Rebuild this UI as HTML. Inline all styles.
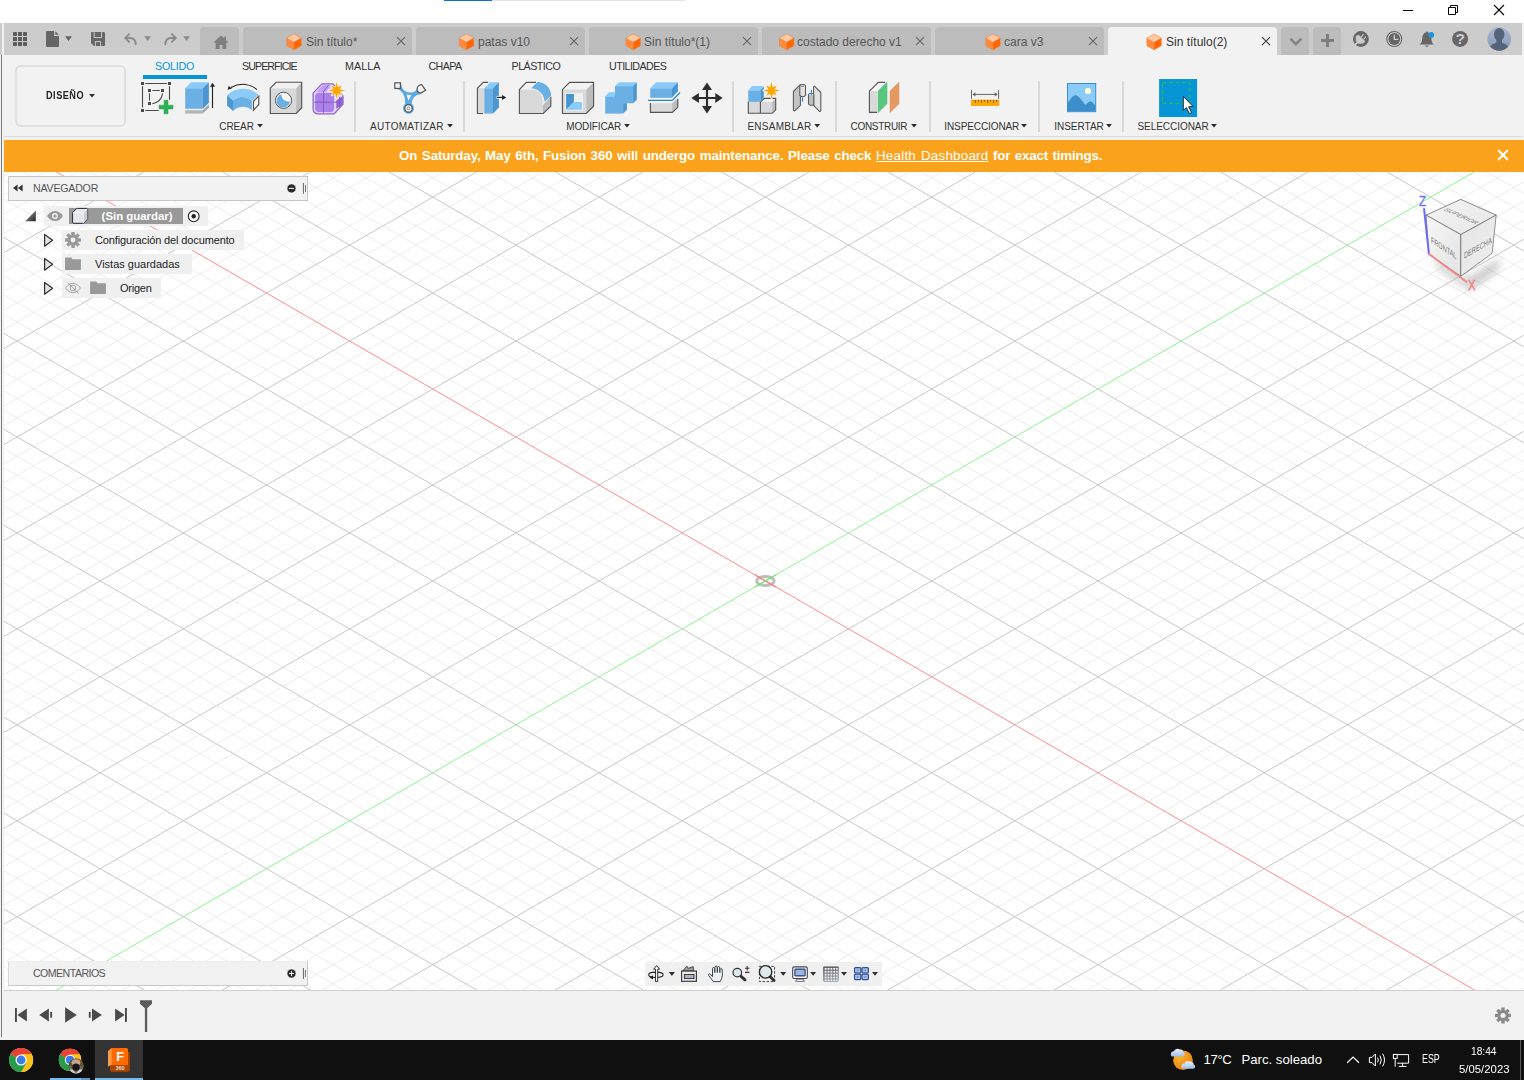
<!DOCTYPE html>
<html lang="es">
<head>
<meta charset="utf-8">
<title>Autodesk Fusion 360</title>
<style>
html,body{margin:0;padding:0}
body{width:1524px;height:1080px;position:relative;overflow:hidden;background:#fff;font-family:"Liberation Sans",Arial,sans-serif;font-size:11px;color:#333}
.a{position:absolute}
svg{position:absolute;overflow:visible}
.t{position:absolute;white-space:nowrap;line-height:1}
/* chrome */
#tabbar{left:4px;top:23px;width:1518px;height:32px;background:#ccc}
#ribbon{left:2px;top:55px;width:1522px;height:85px;background:#f2f2f2}
.dtab{position:absolute;top:27px;height:28px;width:169px;background:#bcbcbc;border-radius:4px 4px 0 0}
.dtab.on{background:#f2f2f2}
.dtab .t{top:9px;font-size:12px;color:#555}
.dtab.on .t{color:#333}
.rt{top:61px;font-size:10.7px;color:#333;letter-spacing:-.1px}
.gl{top:122px;font-size:10px;color:#333}
.sep{position:absolute;top:81px;width:1.5px;height:51px;background:#d9d9d9}
.grid{position:absolute;overflow:hidden}
.row{position:absolute;height:20px;background:#f0f0f0}
.row .t{font-size:11px;color:#222;top:5px}
</style>
</head>
<body>

<!-- title bar -->
<div class="a" style="left:444px;top:0;width:48px;height:1px;background:#0a6fd6"></div>
<div class="a" style="left:492px;top:0;width:193px;height:1px;background:#e3e3e3"></div>
<svg style="left:1396px;top:0" width="128" height="22" viewBox="0 0 128 22">
  <path d="M7 10.5H17" stroke="#000" stroke-width="1" fill="none"/>
  <path d="M52.5 7.5H59.5V14.5H52.5ZM54.5 7.5V5.5H61.5V12.5H59.5" stroke="#000" stroke-width="1" fill="none"/>
  <path d="M98 5L108 15M108 5L98 15" stroke="#000" stroke-width="1.1" fill="none"/>
</svg>
<!-- window frame -->
<div class="a" style="left:0;top:23px;width:2px;height:32px;background:#cbcbcb"></div>
<div class="a" style="left:2px;top:23px;width:2px;height:32px;background:#f0f0f0"></div>
<div class="a" style="left:0;top:55px;width:4px;height:985px;background:#f2f2f2"></div>
<div class="a" style="left:1px;top:55px;width:1.4px;height:982px;background:#7a7a7a"></div>
<div id="tabbar" class="a"></div>
<div class="a" style="left:1522px;top:23px;width:2px;height:32px;background:#f2f2f2"></div>
<!-- quick access -->
<svg style="left:4px;top:23px" width="240" height="32" viewBox="4 23 240 32">
  <g fill="#5c5c5c">
    <rect x="13" y="32" width="4" height="4" rx=".8"/><rect x="18" y="32" width="4" height="4"/><rect x="23" y="32" width="4" height="4" rx=".8"/>
    <rect x="13" y="37" width="4" height="4"/><rect x="18" y="37" width="4" height="4"/><rect x="23" y="37" width="4" height="4"/>
    <rect x="13" y="42" width="4" height="4" rx=".8"/><rect x="18" y="42" width="4" height="4"/><rect x="23" y="42" width="4" height="4" rx=".8"/>
  </g>
  <!-- file -->
  <path d="M47 31H54.1V35.9H59V46A1 1 0 0 1 58 47H47A1 1 0 0 1 46 46V32A1 1 0 0 1 47 31Z" fill="#666"/>
  <path d="M55.3 31.2L58.9 34.7H55.3Z" fill="#666"/>
  <path d="M65 36.2H72L68.5 41Z" fill="#666"/>
  <!-- save -->
  <path d="M92 32H104A1 1 0 0 1 105 33V45A1 1 0 0 1 104 46H94L91 43V33A1 1 0 0 1 92 32Z" fill="#666"/>
  <path d="M94.2 32V37.6H101.6V32" stroke="#ccc" stroke-width="1" fill="none"/>
  <path d="M95.4 46V41.6H100.6V46" stroke="#ccc" stroke-width="1" fill="none"/>
  <!-- undo -->
  <g stroke="#8a8a8a" stroke-width="1.8" fill="none" stroke-linecap="butt" stroke-linejoin="miter">
    <path d="M129.6 33.6L125.2 38L129.6 42.4"/>
    <path d="M125.6 38H130.5Q135.8 38.6 135.8 45"/>
    <path d="M171.4 33.6L175.8 38L171.4 42.4"/>
    <path d="M175.4 38H170.5Q165.2 38.6 165.2 45"/>
  </g>
  <path d="M144.2 36.3H151L147.6 41Z" fill="#8a8a8a"/>
  <path d="M183.2 36.3H190L186.6 41Z" fill="#8a8a8a"/>
  <!-- home tab -->
  <path d="M200 55V31A4 4 0 0 1 204 27H235A4 4 0 0 1 239 31V55Z" fill="#bcbcbc"/>
  <path d="M221 35.4L213.4 42.4H215.6V49H219.6V45H222.4V49H226.4V42.4H228.6L226 40V36.6H224.4V38.5Z" fill="#7f7f7f"/>
</svg>
<!-- document tabs -->
<div class="dtab" style="left:243px"><span class="t" style="left:63px">Sin título*</span></div>
<div class="dtab" style="left:416px"><span class="t" style="left:62px">patas v10</span></div>
<div class="dtab" style="left:589px"><span class="t" style="left:55px">Sin título*(1)</span></div>
<div class="dtab" style="left:762px"><span class="t" style="left:35px">costado derecho v1</span></div>
<div class="dtab" style="left:935px"><span class="t" style="left:69px">cara v3</span></div>
<div class="dtab on" style="left:1108px"><span class="t" style="left:58px">Sin título(2)</span></div>
<svg style="left:0;top:23px" width="1524" height="32" viewBox="0 23 1524 32">
  <defs>
    <g id="cube">
      <path d="M7.2 0L14.4 3.9L7.2 7.9L0 3.9Z" fill="#ffc9a3"/>
      <path d="M0 3.9L7.2 7.9V15.8L0 11.8Z" fill="#ff8a3c"/>
      <path d="M14.4 3.9L7.2 7.9V15.8L14.4 11.8Z" fill="#f60"/>
      <path d="M7.2 0L14.4 3.9V11.8L7.2 15.8L0 11.8V3.9Z" fill="none" stroke="#f07a2a" stroke-width=".5"/>
    </g>
    <path id="tx" d="M-4 -4L4 4M4 -4L-4 4" stroke-width="1.15" fill="none"/>
  </defs>
  <use href="#cube" x="286.8" y="34"/><use href="#tx" x="401" y="41.2" stroke="#686868"/>
  <use href="#cube" x="459.3" y="34"/><use href="#tx" x="574" y="41.2" stroke="#686868"/>
  <use href="#cube" x="626" y="34"/><use href="#tx" x="747" y="41.2" stroke="#686868"/>
  <use href="#cube" x="779.5" y="34"/><use href="#tx" x="920" y="41.2" stroke="#686868"/>
  <use href="#cube" x="985.8" y="34"/><use href="#tx" x="1093" y="41.2" stroke="#686868"/>
  <use href="#cube" x="1146.9" y="34"/><use href="#tx" x="1266" y="41.2" stroke="#444"/>
  <!-- dropdown + plus buttons -->
  <path d="M1281 55V31A4 4 0 0 1 1285 27H1305A4 4 0 0 1 1309 31V55Z" fill="#bcbcbc"/>
  <path d="M1313 55V31A4 4 0 0 1 1317 27H1337A4 4 0 0 1 1341 31V55Z" fill="#bcbcbc"/>
  <path d="M1290.5 38.8L1295.9 44.1L1301.3 38.8" stroke="#858585" stroke-width="2.6" fill="none"/>
  <path d="M1321 39H1334V42H1321ZM1326 34H1329V47H1326Z" fill="#7d7d7d"/>
  <!-- extensions -->
  <g id="ext">
    <circle cx="1360.9" cy="39" r="7.9" fill="#666"/>
    <path d="M1357 35.4L1359.2 35.6L1364.7 41.2L1363.5 43L1358.8 43.4L1356.3 41.4L1356.1 36.8Z" fill="#ccc" stroke="#ccc" stroke-width=".8" stroke-linejoin="round"/>
    <path d="M1358 42.2L1354 45.4" stroke="#ccc" stroke-width="1.7"/>
    <path d="M1361.2 37.1L1363.4 34.2M1363.9 39.2L1365.9 36.7" stroke="#ccc" stroke-width="1.1"/>
  </g>
  <!-- clock -->
  <circle cx="1394.3" cy="39" r="7.5" fill="none" stroke="#666" stroke-width="1.1"/>
  <circle cx="1394.3" cy="39" r="5.9" fill="#666"/>
  <path d="M1394.3 34.8V39.4H1398.4" stroke="#ccc" stroke-width="1.3" fill="none"/>
  <!-- bell -->
  <path d="M1419.6 44.6C1422 42.8 1422 40.6 1422.2 38.2C1422.5 34.8 1424 33 1425.8 32.6C1425.8 31.2 1427.8 31.2 1427.8 32.6C1429.6 33 1431.1 34.8 1431.4 38.2C1431.6 40.6 1431.6 42.8 1434 44.6Z" fill="#666"/>
  <path d="M1424.8 45.6H1428.8Q1426.8 48.2 1424.8 45.6Z" fill="#666"/>
  <circle cx="1431.2" cy="34.9" r="2.9" fill="#1a95e0"/>
  <!-- help -->
  <circle cx="1460.1" cy="38.9" r="8" fill="#666"/>
  <!-- avatar -->
  <defs>
    <linearGradient id="av" x1="0" y1="0" x2="0" y2="1"><stop offset="0" stop-color="#a9b9d2"/><stop offset="1" stop-color="#8697b5"/></linearGradient>
    <clipPath id="avc"><circle cx="1499.2" cy="39" r="11.8"/></clipPath>
  </defs>
  <circle cx="1499.2" cy="39" r="11.8" fill="url(#av)"/>
  <g clip-path="url(#avc)" fill="#566479">
    <ellipse cx="1499.2" cy="34.4" rx="5.2" ry="6.4"/>
    <path d="M1488 53C1488.6 45.6 1493 44 1496.6 42.6H1501.8C1505.4 44 1509.8 45.6 1510.4 53Z"/>
    <rect x="1496.4" y="38" width="5.6" height="6"/>
  </g>
</svg>
<span class="t" style="left:1455.6px;top:31.2px;font-size:15.5px;font-weight:bold;color:#ccc">?</span>

<div id="ribbon" class="a"></div>
<div class="a" style="left:4px;top:136px;width:1518px;height:1px;background:#dcdcdc"></div>
<!-- workspace button -->
<div class="a" style="left:15.2px;top:65px;width:110.8px;height:61.6px;border:2px solid #dfdfdf;border-radius:6px;background:#f2f2f2;box-sizing:border-box"></div>
<span class="t" style="left:46px;top:90px;font-size:10.9px;font-weight:bold;color:#222;letter-spacing:.6px;transform:scaleX(.84);transform-origin:0 0">DISEÑO</span>
<!-- ribbon tabs -->
<span class="t rt" style="left:155px;color:#0696d7;letter-spacing:-0.23px">SOLIDO</span>
<span class="t rt" style="left:242px;letter-spacing:-0.95px">SUPERFICIE</span>
<span class="t rt" style="left:345px;letter-spacing:0.1px">MALLA</span>
<span class="t rt" style="left:428.5px;letter-spacing:-0.6px">CHAPA</span>
<span class="t rt" style="left:511.5px;letter-spacing:-0.5px">PLÁSTICO</span>
<span class="t rt" style="left:609px;letter-spacing:-0.56px">UTILIDADES</span>
<div class="a" style="left:142.5px;top:75.3px;width:64px;height:3.4px;background:#0696d7"></div>
<!-- group labels -->
<span class="t gl" style="left:219.3px;letter-spacing:-0.1px">CREAR</span>
<span class="t gl" style="left:370px;letter-spacing:0.27px">AUTOMATIZAR</span>
<span class="t gl" style="left:566.3px;letter-spacing:-0.15px">MODIFICAR</span>
<span class="t gl" style="left:747.4px;letter-spacing:0.27px">ENSAMBLAR</span>
<span class="t gl" style="left:850.5px;letter-spacing:-0.3px">CONSTRUIR</span>
<span class="t gl" style="left:944.3px;letter-spacing:-0.1px">INSPECCIONAR</span>
<span class="t gl" style="left:1054.2px;letter-spacing:0px">INSERTAR</span>
<span class="t gl" style="left:1137.4px;letter-spacing:-0.04px">SELECCIONAR</span>
<div class="sep" style="left:354.3px"></div>
<div class="sep" style="left:463.3px"></div>
<div class="sep" style="left:732.4px"></div>
<div class="sep" style="left:835.3px"></div>
<div class="sep" style="left:929.3px"></div>
<div class="sep" style="left:1038.1px"></div>
<div class="sep" style="left:1122px"></div>
<svg style="left:0;top:55px" width="1524" height="85" viewBox="0 55 1524 85">
  <defs>
    <path id="dd" d="M-2.9 -1.7H2.9L0 1.7Z" fill="#2a2a2a"/>
    <path id="star" d="M0.00 -8.40L1.30 -3.14L5.09 -5.09L3.14 -1.30L8.40 0.00L3.14 1.30L5.09 5.09L1.30 3.14L0.00 8.40L-1.30 3.14L-5.09 5.09L-3.14 1.30L-8.40 0.00L-3.14 -1.30L-5.09 -5.09L-1.30 -3.14Z" fill="#fca800" stroke="#f4efe8" stroke-width="1.5" stroke-linejoin="round" paint-order="stroke"/>
  </defs>
  <use href="#dd" x="92" y="95.8"/>
  <use href="#dd" x="260" y="125.8"/><use href="#dd" x="450" y="125.8"/><use href="#dd" x="627" y="125.8"/>
  <use href="#dd" x="817.2" y="125.8"/><use href="#dd" x="914" y="125.8"/><use href="#dd" x="1024" y="125.8"/>
  <use href="#dd" x="1109" y="125.8"/><use href="#dd" x="1214" y="125.8"/>
  <!-- 1 sketch -->
  <g fill="#4a4a4a">
    <rect x="141" y="82" width="3" height="3"/><rect x="168" y="82" width="3" height="3"/><rect x="141" y="109" width="3" height="3"/>
    <rect x="148" y="89" width="3" height="3"/><rect x="161" y="89" width="3" height="3"/><rect x="148" y="102" width="3" height="3"/>
  </g>
  <g stroke="#4a4a4a" stroke-width="1.1" fill="none">
    <path d="M145.3 83.5H166.8M142.5 86.2V107.6M169.5 86.2V99.8M145.3 110.5H158.7"/>
    <path d="M152.3 90.5H159.8M149.5 93.3V100.6"/>
    <path d="M162.7 93.3C161.8 98.6 157.6 102.6 152.3 103.7"/>
  </g>
  <path d="M164.1 100.2H168V105.2H173V108.9H168V113.8H164.1V108.9H159.1V105.2H164.1Z" fill="#2bb255" stroke="#219a47" stroke-width=".5"/>
  <!-- 2 extrude -->
  <path d="M185.2 88.2H202.9V108.8H185.2Z" fill="#6bb0e5"/>
  <path d="M185.2 88.2L191 82.2H208.9L202.9 88.2Z" fill="#8acbfa"/>
  <path d="M202.9 88.2L208.9 82.2V102.8L202.9 108.8Z" fill="#4b96d1"/>
  <path d="M185.2 110.2H202.9V113.6H185.2Z" fill="#b5b5b5"/>
  <path d="M202.9 110.2L208.9 104.2V107.6L202.9 113.6Z" fill="#a2a2a2"/>
  <path d="M212.5 86.1V107.9" stroke="#222" stroke-width="1.12"/>
  <path d="M210 86.8L212.5 82.8L215 86.8Z" fill="#222"/>
  <!-- 3 revolve -->
  <path d="M256.9 89.6C251 84 241 82.2 230.9 87.4" stroke="#222" stroke-width="1.1" fill="none"/>
  <path d="M227.6 89.8L228.7 85.9L232 88.5Z" fill="#222"/>
  <path d="M227.1 95.2C236 87 250 86.6 258.6 95L251.9 100.9C246 95.6 239 95.6 233 100.6Z" fill="#8ccbf9"/>
  <path d="M227.1 95.2L233 100.6V110.9L227.1 105.4Z" fill="#4b96d1"/>
  <path d="M233 100.6C239 95.6 246 95.6 251.9 100.9V109.9C246 105.6 239 105.8 233 110.9Z" fill="#6bb0e5"/>
  <path d="M253.5 101.2L258.8 96.1V104.6L253.5 110.2Z" fill="#fafafa" stroke="#555" stroke-width="1.2"/>
  <!-- 4 hole -->
  <path d="M270.3 88.2H296.2V113.5H270.3Z" fill="#d9d9d9"/>
  <path d="M270.3 88.2L276.1 82.3H301.7L296.2 88.2Z" fill="#f1f1f1"/>
  <path d="M296.2 88.2L301.7 82.3V107.7L296.2 113.5Z" fill="#bcbcbc"/>
  <path d="M270.3 88.2L276.1 82.3H301.7V107.7L296.2 113.5H270.3Z" fill="none" stroke="#525252" stroke-width="1.12" stroke-linejoin="miter"/>
  <circle cx="283.5" cy="100.3" r="8.1" fill="#f3f3f3" stroke="#555" stroke-width="1"/>
  <path d="M281.6 94.4A6.6 6.6 0 1 0 289.8 101.2A6.4 6.4 0 0 1 281.6 94.4Z" fill="#6bb0e5"/>
  <!-- 5 form -->
  <path d="M313.1 93.2L321.6 84.2Q322 83.9 322.6 83.9H333L343 96V104.2L334.6 113.3Q334.2 113.8 333.6 113.8H318.4Q313.1 113.8 313.1 108.4Z" fill="#e0d0f6" stroke="#8d63c8" stroke-width="1.2"/>
  <path d="M316.6 92.2L322.6 85.2H331L326 92.2Z" fill="#c59bfb"/>
  <rect x="315.2" y="93.1" width="18.8" height="18.8" rx="3.4" fill="#ab80e8"/>
  <path d="M336.3 100.6L342.8 96.2V104.2L336.3 108.7Z" fill="#9065d0"/>
  <path d="M328.6 85L323.5 91.6V112.6M313.8 102.2H336.2L342.6 97.6" stroke="#7f58b8" stroke-width=".9" fill="none"/>
  <path d="M339.6 96.8V107" stroke="#7f58b8" stroke-width=".8"/>
  <use href="#star" x="336.6" y="90.5"/>
  <!-- 6 automate -->
  <path d="M395.3 88.4C401 89.6 405.6 94 405.2 103.8A5.5 5.5 0 1 0 411.8 103.8C411.8 97.4 416 94.2 421.4 94.2L417.4 88.4C415.6 91.4 413 92.6 410.2 92.6C405.4 92.6 401.6 89.6 401.2 83.6Z" fill="#5aa9e6"/>
  <path d="M406.6 94.6L411.4 95.3L408.3 100.8Z" fill="#f2f2f2"/>
  <rect x="394.8" y="82.8" width="5.6" height="5.6" fill="#f5f5f5" stroke="#555" stroke-width="1.2"/>
  <path d="M417.1 89.4C417.1 86.8 418.8 85.2 421.5 84.5L425.6 90.4L421.2 92.8C418.8 92.8 417.1 91.4 417.1 89.4Z" fill="#f5f5f5" stroke="#555" stroke-width="1.2"/>
  <circle cx="408.5" cy="108.4" r="3.7" fill="#f5f5f5" stroke="#555" stroke-width="1.2"/>
  <circle cx="408.5" cy="108.4" r="1.4" fill="none" stroke="#777" stroke-width=".8"/>
  <!-- 7 press pull -->
  <path d="M477.4 88.2L483.3 82.3H490L484.2 88.2Z" fill="#f3f3f3"/>
  <path d="M477.4 88.2H484.2V113.5H477.4Z" fill="#d9d9d9"/>
  <path d="M488.2 82.4H483.3L477.4 88.3V113.5H483" fill="none" stroke="#555" stroke-width="1.12"/>
  <path d="M484.3 88.2H493V113.6H484.3Z" fill="#6bb0e5"/>
  <path d="M484.3 88.2L490.3 82.2H498.9L493 88.2Z" fill="#8acbfa"/>
  <path d="M493 88.2L498.9 82.2V107.6L493 113.6Z" fill="#4b96d1"/>
  <path d="M496.6 97.4H503" stroke="#f6f6f6" stroke-width="3"/>
  <path d="M497 97.4H503" stroke="#222" stroke-width="1.2"/>
  <path d="M502.1 95L506.3 97.4L502.1 99.9Z" fill="#222"/>
  <!-- 8 fillet -->
  <path d="M519.4 89.6L526.3 82.4H537.4L530.9 89.6Z" fill="#f3f3f3"/>
  <path d="M519.4 89.6H532.3A10.4 10.4 0 0 1 542.7 100V113.5H519.4Z" fill="#d9d9d9"/>
  <path d="M530.9 88.5L537.4 82A13.7 13.7 0 0 1 551.1 95.5L544.4 101.9A13.4 13.4 0 0 0 530.9 88.5Z" fill="#6bb0e5"/>
  <path d="M530.9 88.5A13.4 13.4 0 0 1 544.4 101.9L542.7 103.6V100A10.4 10.4 0 0 0 532.3 89.6Z" fill="#ececec"/>
  <path d="M542.9 104.9L550.8 97V106.2L542.9 113.5Z" fill="#bcbcbc"/>
  <path d="M536 82.4H526.3L519.4 89.6V113.5H543.3L550.8 106.2V96.8" fill="none" stroke="#555" stroke-width="1.12"/>
  <!-- 9 shell -->
  <path d="M562.4 89.6L569.6 82.4H593.6L586.3 89.6Z" fill="#f3f3f3"/>
  <path d="M562.4 89.6H586.3V113.5H562.4Z" fill="#d9d9d9"/>
  <path d="M586.3 89.6L593.6 82.4V106.2L586.3 113.5Z" fill="#bcbcbc"/>
  <path d="M562.4 89.6L569.6 82.4H593.6V106.2L586.3 113.5H562.4Z" fill="none" stroke="#555" stroke-width="1.12"/>
  <rect x="565" y="92.8" width="18" height="18" fill="#f0f0f0"/>
  <path d="M566.1 94H573.9V101.9L566.1 109.8Z" fill="#4794ce"/>
  <path d="M566.1 109.8L573.9 101.9H581.9V109.8Z" fill="#8acbfa"/>
  <!-- 10 combine -->
  <path d="M615 86.1H633.1V103.3H615Z" fill="#6bb0e5"/>
  <path d="M615 86.1L619.1 82.2H636.8L633.1 86.1Z" fill="#8acbfa"/>
  <path d="M633.1 86.1L636.8 82.2V99.8L633.1 103.3Z" fill="#4b96d1"/>
  <path d="M605.2 96.3H623.1V113.6H605.2Z" fill="#6bb0e5"/>
  <path d="M605.2 96.3L609.1 92.3H615V96.3Z" fill="#8acbfa"/>
  <path d="M623.1 103.3H626.9V109.8L623.1 113.6Z" fill="#4b96d1"/>
  <!-- 11 split -->
  <path d="M650.2 88.2H672V97.8H650.2Z" fill="#6bb0e5"/>
  <path d="M650.2 88.2L656.1 82.2H677.9L672 88.2Z" fill="#8acbfa"/>
  <path d="M672 88.2L677.9 82.2V91.2L672 97.8Z" fill="#4b96d1"/>
  <path d="M650.7 103.3H672.2V112.3H650.7Z" fill="#d9d9d9"/>
  <path d="M672.2 103.3L677.7 98.6V107.3L672.2 112.4Z" fill="#bcbcbc"/>
  <path d="M650.4 103V112.4H672.3L677.8 107.3V98.7" fill="none" stroke="#555" stroke-width="1.12"/>
  <path d="M648 100.3H672.3L680 92.5" fill="none" stroke="#f6f2ec" stroke-width="3.2"/>
  <path d="M648 100.3H672.3L680 92.5" fill="none" stroke="#1e88e5" stroke-width="1.2"/>
  <!-- 12 move -->
  <path d="M707 82.5L712 89.9H708.1V96.9H715.3V93L722.6 98L715.3 103V99.1H708.1V106H712L707 113.5L702 106H705.9V99.1H698.9V103L691.3 98L698.9 93V96.9H705.9V89.9H702Z" fill="#2e2e2e"/>
  <!-- 13 new component -->
  <path d="M748.3 102H760.4V113.3H748.3Z" fill="#d9d9d9"/>
  <path d="M760.5 102.1H772.1V113.3H760.5Z" fill="#d9d9d9"/>
  <path d="M760.5 102.1L764 98.4H775.6L772.1 102.1Z" fill="#f3f3f3"/>
  <path d="M772.1 102.1L775.6 98.4V109.8L772.1 113.3Z" fill="#bcbcbc"/>
  <path d="M748.3 101.5V113.3H772.2L775.7 109.8V98.4H764.1L760.4 102.2V113.3" fill="none" stroke="#555" stroke-width="1.12"/>
  <path d="M748.2 90.3H760.3V101.9H748.2Z" fill="#6bb0e5"/>
  <path d="M748.2 90.3L752.2 86.1H763.8L760.3 90.3Z" fill="#8acbfa"/>
  <path d="M760.3 90.3L763.8 86.4V98L760.3 101.9Z" fill="#4b96d1"/>
  <use href="#star" x="771.5" y="90.5"/>
  <!-- 14 joint -->
  <path d="M793.4 91.5L800.4 84.7V105.4L795 110.6Q793.4 111.4 793.4 109.6Z" fill="#c4c4c4" stroke="#5c5c5c" stroke-width="1.08" stroke-linejoin="round"/>
  <path d="M799.8 86.1A2.85 1.6 0 0 1 805.5 86.1V94A2.85 1.7 0 0 1 799.8 95.4Z" fill="#e2e2e2" stroke="#5c5c5c" stroke-width="1.08"/>
  <ellipse cx="802.6" cy="86.3" rx="1.5" ry=".7" fill="#8a8a8a"/>
  <path d="M802.5 97.4V101.7" stroke="#1e88e5" stroke-width="1.12"/>
  <path d="M813.6 86.9L814.4 86.1L820.8 92.5V110.6Q820.4 111.9 819.2 111.2L813.6 105.4Z" fill="#e2e2e2" stroke="#5c5c5c" stroke-width="1.08" stroke-linejoin="round"/>
  <path d="M808.5 94.6A2.7 1.4 0 0 1 813.8 94.6V105.2H810.4Q808.5 105.2 808.5 103.6Z" fill="#bdbdbd" stroke="#5c5c5c" stroke-width="1.08"/>
  <ellipse cx="811.2" cy="94.8" rx="2.1" ry="1" fill="#e6e6e6"/>
  <path d="M811.4 90.1V95.5" stroke="#1e88e5" stroke-width="1.12"/>
  <!-- 15 construct -->
  <path d="M869.4 91.2L878.3 82.4H886L878 91.2Z" fill="#f5f5f5"/>
  <path d="M869.4 91.2H877V112.4H869.4Z" fill="#d9d9d9"/>
  <path d="M885 82.4H878.3L869.4 91.2V112.4H877" fill="none" stroke="#555" stroke-width="1.12"/>
  <path d="M878.2 91L886.9 82.4V103.8L878.2 112.4Z" fill="#5ac77f" stroke="#43b36b" stroke-width=".6"/>
  <path d="M890.1 91L898.9 82.4V103.8L890.1 112.4Z" fill="#e59a63" stroke="#d9894f" stroke-width=".6"/>
  <!-- 16 measure -->
  <rect x="971.2" y="100" width="27.8" height="5.7" fill="#ffa800" stroke="#ea9800" stroke-width=".5"/>
  <path d="M975.3 100V103M978.4 100V101.8M981.5 100V103M984.4 100V101.8M987.6 100V103M990.5 100V101.8M993.7 100V103M996.6 100V101.8" stroke="#7a5a10" stroke-width=".9"/>
  <path d="M971.5 90.1V98.8M998.6 90.1V98.8M973 94.4H997" stroke="#666" stroke-width="1"/>
  <path d="M972.4 94.4L975.4 92.3V96.5ZM997.7 94.4L994.7 92.3V96.5Z" fill="#666"/>
  <!-- 17 insert -->
  <rect x="1067.5" y="83.5" width="28.2" height="28.2" fill="#8acbfa" stroke="#3b8fcf" stroke-width="1"/>
  <circle cx="1088" cy="91" r="3.1" fill="#ffffcf"/>
  <path d="M1068 102.6C1071 97.6 1074 95.2 1075.7 95.2C1079 95.2 1082 101.4 1085.5 105C1087.4 103 1088.8 101.4 1090.4 101.4C1092 101.4 1093.6 103.4 1095.2 105.5V111.2H1068Z" fill="#3d8fc9"/>
  <!-- 18 select -->
  <rect x="1159.1" y="79" width="38" height="38" fill="#0696d7"/>
  <rect x="1162.5" y="82.5" width="27.2" height="20.9" fill="none" stroke="#2bb84a" stroke-width="1.2" stroke-dasharray="4 2.5"/>
  <path d="M1183.3 96.4V110.4L1186.4 107.6L1189.4 113.6L1191.6 112.6L1188.7 106.8L1193 106.4Z" fill="#fff" stroke="#2b2b2b" stroke-width="1"/>

</svg>

<div class="a" style="left:4px;top:140px;width:1520px;height:32px;background:#faa21b"></div>
<span class="t" id="bannertxt" style="left:399px;top:148.5px;font-size:13.4px;font-weight:bold;color:#fff;word-spacing:1px"><span style="letter-spacing:-.15px">On Saturday, May 6th, Fusion 360 will undergo maintenance. Please check </span><span style="font-weight:normal;text-decoration:underline;letter-spacing:.22px">Health Dashboard</span><span style="letter-spacing:-.2px"> for exact timings.</span></span>
<svg style="left:1497px;top:149px" width="12" height="12" viewBox="0 0 12 12"><path d="M1.2 1.2L10.8 10.8M10.8 1.2L1.2 10.8" stroke="#fff" stroke-width="2.1" fill="none"/></svg>

<svg class="grid" style="left:4px;top:172px" width="1520" height="818" viewBox="0 0 1520 818">
<path d="M0 813.91L1520 1690.82M0 794.73L1520 1671.63M0 775.54L1520 1652.44M0 756.35L1520 1633.25M0 717.97L1520 1594.88M0 698.79L1520 1575.69M0 679.60L1520 1556.50M0 660.41L1520 1537.31M0 622.03L1520 1498.94M0 602.85L1520 1479.75M0 583.66L1520 1460.56M0 564.47L1520 1441.37M0 526.09L1520 1403.00M0 506.91L1520 1383.81M0 487.72L1520 1364.62M0 468.53L1520 1345.43M0 430.15L1520 1307.06M0 410.97L1520 1287.87M0 391.78L1520 1268.68M0 372.59L1520 1249.49M0 334.21L1520 1211.12M0 315.03L1520 1191.93M0 295.84L1520 1172.74M0 276.65L1520 1153.55M0 238.27L1520 1115.18M0 219.09L1520 1095.99M0 199.90L1520 1076.80M0 180.71L1520 1057.61M0 142.33L1520 1019.24M0 123.15L1520 1000.05M0 103.96L1520 980.86M0 84.77L1520 961.67M0 46.39L1520 923.30M0 27.21L1520 904.11M0 8.02L1520 884.92M0 -11.17L1520 865.73M0 -49.55L1520 827.36M0 -68.73L1520 808.17M0 -87.92L1520 788.98M0 -107.11L1520 769.79M0 -145.49L1520 731.42M0 -164.67L1520 712.23M0 -183.86L1520 693.04M0 -203.05L1520 673.85M0 -241.43L1520 635.48M0 -260.61L1520 616.29M0 -279.80L1520 597.10M0 -298.99L1520 577.91M0 -337.37L1520 539.54M0 -356.55L1520 520.35M0 -375.74L1520 501.16M0 -394.93L1520 481.97M0 -433.31L1520 443.60M0 -452.49L1520 424.41M0 -471.68L1520 405.22M0 -490.87L1520 386.03M0 -529.25L1520 347.66M0 -548.43L1520 328.47M0 -567.62L1520 309.28M0 -586.81L1520 290.09M0 -625.19L1520 251.72M0 -644.37L1520 232.53M0 -663.56L1520 213.34M0 -682.75L1520 194.15M0 -721.13L1520 155.78M0 -740.31L1520 136.59M0 -759.50L1520 117.40M0 -778.69L1520 98.21M0 -817.07L1520 59.84M0 -836.25L1520 40.65M0 -855.44L1520 21.46M0 -874.63L1520 2.27M0 3.89L1520 -873.02M0 23.07L1520 -853.83M0 42.26L1520 -834.64M0 61.45L1520 -815.45M0 99.83L1520 -777.08M0 119.01L1520 -757.89M0 138.20L1520 -738.70M0 157.39L1520 -719.51M0 195.77L1520 -681.14M0 214.95L1520 -661.95M0 234.14L1520 -642.76M0 253.33L1520 -623.57M0 291.71L1520 -585.20M0 310.89L1520 -566.01M0 330.08L1520 -546.82M0 349.27L1520 -527.63M0 387.65L1520 -489.26M0 406.83L1520 -470.07M0 426.02L1520 -450.88M0 445.21L1520 -431.69M0 483.59L1520 -393.32M0 502.77L1520 -374.13M0 521.96L1520 -354.94M0 541.15L1520 -335.75M0 579.53L1520 -297.38M0 598.71L1520 -278.19M0 617.90L1520 -259.00M0 637.09L1520 -239.81M0 675.47L1520 -201.44M0 694.65L1520 -182.25M0 713.84L1520 -163.06M0 733.03L1520 -143.87M0 771.41L1520 -105.50M0 790.59L1520 -86.31M0 809.78L1520 -67.12M0 828.97L1520 -47.93M0 867.35L1520 -9.56M0 886.53L1520 9.63M0 905.72L1520 28.82M0 924.91L1520 48.01M0 963.29L1520 86.38M0 982.47L1520 105.57M0 1001.66L1520 124.76M0 1020.85L1520 143.95M0 1059.23L1520 182.32M0 1078.41L1520 201.51M0 1097.60L1520 220.70M0 1116.79L1520 239.89M0 1155.17L1520 278.26M0 1174.35L1520 297.45M0 1193.54L1520 316.64M0 1212.73L1520 335.83M0 1251.11L1520 374.20M0 1270.29L1520 393.39M0 1289.48L1520 412.58M0 1308.67L1520 431.77M0 1347.05L1520 470.14M0 1366.23L1520 489.33M0 1385.42L1520 508.52M0 1404.61L1520 527.71M0 1442.99L1520 566.08M0 1462.17L1520 585.27M0 1481.36L1520 604.46M0 1500.55L1520 623.65M0 1538.93L1520 662.02M0 1558.11L1520 681.21M0 1577.30L1520 700.40M0 1596.49L1520 719.59M0 1634.87L1520 757.96M0 1654.05L1520 777.15M0 1673.24L1520 796.34M0 1692.43L1520 815.53" stroke="#dcdcdc" stroke-width=".9" fill="none" opacity="0.6"/>
<path d="M0 737.16L1520 1614.06M0 641.22L1520 1518.12M0 545.28L1520 1422.18M0 449.34L1520 1326.24M0 353.40L1520 1230.30M0 257.46L1520 1134.36M0 161.52L1520 1038.42M0 65.58L1520 942.48M0 -126.30L1520 750.60M0 -222.24L1520 654.66M0 -318.18L1520 558.72M0 -414.12L1520 462.78M0 -510.06L1520 366.84M0 -606.00L1520 270.90M0 -701.94L1520 174.96M0 -797.88L1520 79.02M0 80.64L1520 -796.26M0 176.58L1520 -700.32M0 272.52L1520 -604.38M0 368.46L1520 -508.44M0 464.40L1520 -412.50M0 560.34L1520 -316.56M0 656.28L1520 -220.62M0 752.22L1520 -124.68M0 944.10L1520 67.20M0 1040.04L1520 163.14M0 1135.98L1520 259.08M0 1231.92L1520 355.02M0 1327.86L1520 450.96M0 1423.80L1520 546.90M0 1519.74L1520 642.84M0 1615.68L1520 738.78" stroke="#c4c4c4" stroke-width=".95" fill="none"/>
<path d="M0 -30.36L1520 846.54" stroke="#ff8c8c" stroke-width="1" fill="none"/>
<path d="M0 848.16L1520 -28.74" stroke="#8af58a" stroke-width="1" fill="none"/>
<ellipse cx="761.4" cy="408.9" rx="8.7" ry="4.5" fill="none" stroke="#bebebe" stroke-width="3"/>
<path d="M750.9 402.84L771.9 414.96" stroke="#f77" stroke-width="1.2"/>
<path d="M750.9 414.96L771.9 402.84" stroke="#6e6" stroke-width="1.2"/>
</svg>
<!-- browser -->
<div class="a" style="left:8px;top:176px;width:300px;height:25px;background:#f2f2f2;border:1px solid #c6c6c6;box-sizing:border-box"></div>
<span class="t" style="left:33px;top:183px;font-size:10.6px;color:#555;letter-spacing:-.2px">NAVEGADOR</span>
<div class="row" style="left:44px;top:206px;width:164px"></div>
<div class="a" style="left:69px;top:208px;width:114px;height:16px;background:#999"></div>
<span class="t" style="left:101.6px;top:210.5px;font-size:11.4px;font-weight:bold;color:#fff">(Sin guardar)</span>
<div class="row" style="left:62px;top:230px;width:182px"><span class="t" style="left:33px;letter-spacing:-.13px">Configuración del documento</span></div>
<div class="row" style="left:62px;top:254px;width:130px"><span class="t" style="left:33px">Vistas guardadas</span></div>
<div class="row" style="left:62px;top:278px;width:99px"><span class="t" style="left:58px;letter-spacing:-.25px">Origen</span></div>
<svg style="left:0;top:172px" width="320" height="140" viewBox="0 172 320 140">
  <defs>
    <linearGradient id="tg" x1="0" y1="0" x2="1" y2="1"><stop offset="0" stop-color="#bbb"/><stop offset=".5" stop-color="#666"/><stop offset="1" stop-color="#222"/></linearGradient>
    <path id="exp" d="M44.6 234.4L52.6 240.2L44.6 246.2Z" fill="#e1e3ea" stroke="#2e2e2e" stroke-width="1.2" stroke-linejoin="round"/>
    <path id="fold" d="M0 0H6.2L7.4 1.6H15.8V12.5H0Z" fill="#999"/>
  </defs>
  <!-- header icons -->
  <path d="M13 188L17.6 184.6V191.4ZM18 188L22.6 184.6V191.4Z" fill="#333"/>
  <circle cx="291.5" cy="188.4" r="4.5" fill="#2b2b2b" stroke="#fafafa" stroke-width=".6"/><path d="M288.9 188.4H294.1" stroke="#eee" stroke-width="1.1"/>
  <path d="M303.4 183V193.8" stroke="#666" stroke-width="1"/><path d="M305.5 185.2V191.9" stroke="#777" stroke-width="1"/>
  <!-- row1 -->
  <path d="M25.2 221.3L35.8 210.4V221.3Z" fill="url(#tg)"/>
  <path d="M47 216C49.4 212.4 52 210.9 55 210.9C58 210.9 60.6 212.4 63 216C60.6 219.6 58 221.1 55 221.1C52 221.1 49.4 219.6 47 216Z" fill="#999"/>
  <circle cx="55" cy="216" r="3" fill="#f0f0f0"/><circle cx="55" cy="216" r="1.6" fill="#999"/>
  <path d="M72.6 213.2Q72.6 212.4 73.2 211.8L76.4 208.8Q76.8 208.4 77.6 208.4H86.8Q87.6 208.4 87.6 209.2V218.4Q87.6 219 87.2 219.4L84 222.8Q83.6 223.3 82.8 223.3H73.6Q72.6 223.3 72.6 222.4Z" fill="#e6e8ef" stroke="#2b2b2b" stroke-width="1"/>
  <path d="M73 212.6H83.6L87.2 208.8M83.6 212.6V223" stroke="#fff" stroke-width=".9" fill="none" opacity=".8"/>
  <path d="M83.8 212.8L87.4 209V218.6L83.8 222.6Z" fill="#c9ccd6"/>
  <circle cx="193.7" cy="216.3" r="5.4" fill="#fafafa" stroke="#2b2b2b" stroke-width="1.1"/><circle cx="193.7" cy="216.3" r="2.2" fill="#222"/>
  <!-- expanders -->
  <use href="#exp"/><use href="#exp" y="24"/><use href="#exp" y="48"/>
  <!-- gear -->
  <g transform="translate(73 240)" fill="#999">
    <circle r="5.6"/>
    <g id="teeth"><rect x="-1.7" y="-8" width="3.4" height="16"/><rect x="-8" y="-1.7" width="16" height="3.4"/></g>
    <use href="#teeth" transform="rotate(45)"/>
    <circle r="2.4" fill="#f0f0f0"/>
  </g>
  <use href="#fold" x="65.1" y="257.6"/>
  <use href="#fold" x="90.1" y="281.6"/>
  <!-- hidden eye -->
  <path d="M65.6 288C68 284.6 70.4 283.4 73 283.4C75.6 283.4 78 284.6 80.4 288C78 291.4 75.6 292.6 73 292.6C70.4 292.6 68 291.4 65.6 288Z" fill="none" stroke="#a5a5a5" stroke-width="1"/>
  <circle cx="73" cy="288" r="2.8" fill="none" stroke="#a5a5a5" stroke-width="1"/>
  <path d="M67.6 282.6L78.6 293.4" stroke="#a5a5a5" stroke-width="1"/>
</svg>
<!-- comments -->
<div class="a" style="left:8px;top:961px;width:300px;height:25px;background:#f2f2f2;border:1px solid #c8c8c8;border-top-color:#ededed;border-left-color:#d8d8d8;box-sizing:border-box"></div>
<span class="t" style="left:33px;top:968px;font-size:10.6px;color:#555;letter-spacing:-.54px">COMENTARIOS</span>
<svg style="left:280px;top:961px" width="30" height="25" viewBox="280 961 30 25">
  <circle cx="291.5" cy="973.5" r="4.5" fill="#2b2b2b" stroke="#fafafa" stroke-width=".6"/><path d="M289 973.5H294M291.5 971V976" stroke="#eee" stroke-width="1.1"/>
  <path d="M303.4 968V979" stroke="#666" stroke-width="1"/><path d="M305.4 970V977" stroke="#777" stroke-width="1"/>
</svg>
<svg style="left:1400px;top:180px" width="124" height="124" viewBox="1400 180 124 124">
  <defs>
    <filter id="vsh" x="-50%" y="-50%" width="200%" height="200%"><feGaussianBlur stdDeviation="4"/></filter>
    <linearGradient id="vf" x1="0" y1="0" x2="1" y2="1"><stop offset="0" stop-color="#f8f8f8"/><stop offset="1" stop-color="#e2e2e2"/></linearGradient><linearGradient id="vr" x1="0" y1="0" x2="1" y2="1"><stop offset="0" stop-color="#e4e4e4"/><stop offset="1" stop-color="#f0f0f0"/></linearGradient><linearGradient id="vt" x1="0" y1="0" x2="1" y2="1"><stop offset="0" stop-color="#f4f4f4"/><stop offset="1" stop-color="#e6e6e6"/></linearGradient>
  </defs>
  <path d="M1432 256L1466 280L1500 258L1498 270L1470 290L1440 270Z" fill="#9a9a9a" opacity=".55" filter="url(#vsh)"/>
  <path d="M1426.1 215.1L1460.8 199.4L1496.2 215.1L1460.8 234.6Z" fill="url(#vt)" stroke="#5a5a5a" stroke-width=".7" stroke-linejoin="round"/>
  <path d="M1426.1 215.1L1460.8 234.6V276.2L1428.9 254Z" fill="url(#vf)" stroke="#5a5a5a" stroke-width=".65" stroke-linejoin="round"/>
  <path d="M1460.8 234.6L1496.2 215.1L1492.1 253.3L1460.8 276.2Z" fill="url(#vr)" stroke="#5a5a5a" stroke-width=".65" stroke-linejoin="round"/>
  <path d="M1428.9 254L1424.1 209" stroke="#6a6af2" stroke-width="2" stroke-linecap="round"/>
  <path d="M1428.9 254L1466.4 281.8" stroke="#f08a8a" stroke-width="2" stroke-linecap="round"/>
  <text transform="matrix(.9 .4 -.93 .42 1443 210)" font-family="Liberation Sans,Arial,sans-serif" font-size="6.8" fill="#777" letter-spacing=".1">SUPERIOR</text>
  <text transform="matrix(.648 .428 0 1 1430.9 242.4)" font-family="Liberation Sans,Arial,sans-serif" font-size="8.6" fill="#777">FRONTAL</text>
  <text transform="matrix(.66 -.38 0 1 1464 258.8)" font-family="Liberation Sans,Arial,sans-serif" font-size="8.6" fill="#777">DERECHA</text>
  <text transform="translate(1419 205.5) scale(.84 1)" font-family="Liberation Sans,Arial,sans-serif" font-size="14" fill="#7272f4" stroke="#7272f4" stroke-width=".3">Z</text>
  <text transform="translate(1468 290.4) scale(.78 1)" font-family="Liberation Sans,Arial,sans-serif" font-size="14.6" fill="#f97878" stroke="#f97878" stroke-width=".3">X</text>
</svg>

<div class="a" style="left:645px;top:962px;width:237px;height:24px;background:#f0f0f0"></div>
<svg style="left:645px;top:962px" width="237" height="24" viewBox="645 962 237 24">
  <defs><path id="nd" d="M-3 -1.9H3L0 1.9Z" fill="#2e2e2e"/></defs>
  <!-- orbit -->
  <ellipse cx="655.9" cy="974.8" rx="7.2" ry="2.7" fill="none" stroke="#222" stroke-width="1.1"/>
  <path d="M655.5 981.6V969.2H653.6L656.6 965.6L659.6 969.2H657.7V981.6Z" fill="#f6f6f6" stroke="#222" stroke-width=".9"/>
  <path d="M649.4 977.4L653 975.2V979.6Z" fill="#222"/>
  <use href="#nd" x="671.9" y="974"/>
  <!-- look at -->
  <path d="M682.6 971L686.9 966.2L688.1 968.3L693.2 966.6L693.6 971Z" fill="#9a9a9a" stroke="#444" stroke-width=".9"/>
  <rect x="681.6" y="971.1" width="14.8" height="10.2" fill="#f4f4f4" stroke="#3c3c3c" stroke-width="1.2"/>
  <rect x="684.4" y="974.4" width="9.6" height="4.2" fill="#a9b2c6" stroke="#333" stroke-width="1"/>
  <!-- hand -->
  <g fill="#eef1f6" stroke="#333" stroke-width=".9" stroke-linejoin="round">
    <rect x="712.5" y="967.5" width="2.2" height="8" rx="1.1"/>
    <rect x="715" y="966" width="2.2" height="9" rx="1.1"/>
    <rect x="717.5" y="966.6" width="2.2" height="9" rx="1.1"/>
    <rect x="720" y="968.7" width="2.2" height="8" rx="1.1"/>
    <path d="M712.5 973.4V976.6L710.4 974.2C709.4 973.2 707.8 974.4 708.8 975.6C710.4 977.6 712 979.6 713.2 981.6H720.2C720.8 979.6 722.2 978.4 722.2 975.6V973.4Z"/>
  </g>
  <rect x="713" y="972.6" width="8.8" height="3" fill="#eef1f6"/>
  <!-- zoom -->
  <path d="M740.8 976.2L745 979.8" stroke="#333" stroke-width="3" stroke-linecap="round"/>
  <circle cx="737.3" cy="972.6" r="4.3" fill="#dbeaf1" stroke="#333" stroke-width="1.2"/>
  <path d="M745 968.2H749.4M747.2 966V970.4M745 972.4H749.4" stroke="#333" stroke-width="1.1"/>
  <!-- zoom window -->
  <rect x="759.4" y="966.4" width="15.2" height="15.2" fill="none" stroke="#444" stroke-width="1" stroke-dasharray="2.4 1.6"/>
  <path d="M770 976.4L774 980.4" stroke="#333" stroke-width="2.8" stroke-linecap="round"/>
  <circle cx="765.6" cy="971.9" r="6.2" fill="#deebee" stroke="#222" stroke-width="1.3"/>
  <use href="#nd" x="783.2" y="973.8"/>
  <!-- display -->
  <rect x="792.7" y="966.9" width="14.6" height="11.6" rx="1.4" fill="#fafafa" stroke="#444" stroke-width="1.1"/>
  <rect x="794.9" y="969.1" width="10.2" height="6.8" rx=".6" fill="#9db7e0" stroke="#1f3a7a" stroke-width="1.1"/>
  <path d="M796.6 979.2H803.4L804.2 981.4H795.8Z" fill="#fafafa" stroke="#555" stroke-width=".8"/>
  <use href="#nd" x="813.1" y="973.8"/>
  <!-- grid -->
  <defs><linearGradient id="gg" x1="0" y1="0" x2="0" y2="1"><stop offset="0" stop-color="#4a4a4a"/><stop offset="1" stop-color="#8c94a6"/></linearGradient></defs>
  <rect x="823.2" y="966.4" width="15.4" height="15.4" rx="1" fill="url(#gg)"/>
  <g fill="#f6f6f6">
    <rect x="824.6" y="967.8" width="2" height="2"/><rect x="827.5" y="967.8" width="2" height="2"/><rect x="830.4" y="967.8" width="2" height="2"/><rect x="833.3" y="967.8" width="2" height="2"/><rect x="836.1" y="967.8" width="1.6" height="2"/>
    <rect x="824.6" y="970.7" width="2" height="2"/><rect x="827.5" y="970.7" width="2" height="2"/><rect x="830.4" y="970.7" width="2" height="2"/><rect x="833.3" y="970.7" width="2" height="2"/><rect x="836.1" y="970.7" width="1.6" height="2"/>
    <rect x="824.6" y="973.6" width="2" height="2"/><rect x="827.5" y="973.6" width="2" height="2"/><rect x="830.4" y="973.6" width="2" height="2"/><rect x="833.3" y="973.6" width="2" height="2"/><rect x="836.1" y="973.6" width="1.6" height="2"/>
    <rect x="824.6" y="976.5" width="2" height="2"/><rect x="827.5" y="976.5" width="2" height="2"/><rect x="830.4" y="976.5" width="2" height="2"/><rect x="833.3" y="976.5" width="2" height="2"/><rect x="836.1" y="976.5" width="1.6" height="2"/>
    <rect x="824.6" y="979.4" width="2" height="1.6"/><rect x="827.5" y="979.4" width="2" height="1.6"/><rect x="830.4" y="979.4" width="2" height="1.6"/><rect x="833.3" y="979.4" width="2" height="1.6"/><rect x="836.1" y="979.4" width="1.6" height="1.6"/>
  </g>
  <use href="#nd" x="844" y="973.8"/>
  <!-- viewports -->
  <g fill="#a9c0e4" stroke="#2d4f96" stroke-width="1.2">
    <rect x="854.5" y="967.6" width="6.4" height="5.4" rx="1"/><rect x="862" y="967.6" width="6.4" height="5.4" rx="1"/>
    <rect x="854.5" y="974.2" width="6.4" height="5.4" rx="1"/><rect x="862" y="974.2" width="6.4" height="5.4" rx="1"/>
  </g>
  <g fill="#7f9fd4"><rect x="856.4" y="969.4" width="2.6" height="1.8"/><rect x="863.9" y="969.4" width="2.6" height="1.8"/><rect x="856.4" y="976" width="2.6" height="1.8"/><rect x="863.9" y="976" width="2.6" height="1.8"/></g>
  <use href="#nd" x="875" y="973.8"/>
</svg>


<div class="a" style="left:4px;top:990px;width:1520px;height:1px;background:#cfcfcf"></div>
<div class="a" style="left:2px;top:991px;width:1522px;height:49px;background:#f2f2f2"></div>
<div class="a" style="left:1px;top:990px;width:1.4px;height:47px;background:#7a7a7a"></div>
<svg style="left:0;top:991px" width="1524" height="49" viewBox="0 991 1524 49">
  <g fill="#4a4a4a">
    <rect x="15" y="1008" width="1.9" height="13.9"/><path d="M17.4 1014.9L26.9 1008.5V1021.4Z"/>
    <path d="M39.2 1014.9L48.9 1008.5V1021.4Z"/><rect x="50.2" y="1011.9" width="1.9" height="5.8"/>
    <path d="M65.1 1007.2L76.8 1014.9L65.1 1022.8Z"/>
    <rect x="88.8" y="1011.9" width="1.9" height="5.8"/><path d="M92 1008.5L101.9 1014.9L92 1021.4Z"/>
    <path d="M115.1 1008.5L124.7 1014.9L115.1 1021.4Z"/><rect x="125" y="1008" width="1.9" height="13.9"/>
  </g>
  <path d="M140 1000.2H152V1003.8L147.2 1008.3V1031.9H144.9V1008.3L140 1003.8Z" fill="#5c5c5c"/>
  <g transform="translate(1503 1015.5)" fill="#8a8a8a">
    <circle r="5.6"/>
    <g id="teeth2"><rect x="-1.7" y="-8" width="3.4" height="16"/><rect x="-8" y="-1.7" width="16" height="3.4"/></g>
    <use href="#teeth2" transform="rotate(45)"/>
    <circle r="2.6" fill="#f2f2f2"/>
  </g>
</svg>

<div class="a" style="left:0;top:1040px;width:1524px;height:40px;background:#101010"></div>
<div class="a" style="left:95px;top:1040px;width:48px;height:38px;background:#343434"></div>
<div class="a" style="left:95px;top:1078px;width:48px;height:2px;background:#76b9ed"></div>
<div class="a" style="left:50px;top:1078px;width:40px;height:2px;background:#76b9ed"></div>
<div class="a" style="left:81px;top:1078px;width:9px;height:2px;background:#5d9bcb"></div>
<div class="a" style="left:1519.5px;top:1040px;width:1px;height:40px;background:#5a5a5a"></div>
<svg style="left:0;top:1040px" width="1524" height="40" viewBox="0 1040 1524 40">
  <defs>
    <g id="chrome">
      <circle r="12" fill="#fff"/>
      <path d="M0 0L-10.39 -6A12 12 0 0 1 10.39 -6Z" fill="#ea4335"/>
      <path d="M0 0L10.39 -6A12 12 0 0 1 0 12Z" fill="#fbc116"/>
      <path d="M0 0L0 12A12 12 0 0 1 -10.39 -6Z" fill="#2a9c47"/>
      <path d="M-10.39 -6A12 12 0 0 1 10.39 -6L4.7 -2.7L-4.7 -2.7Z" fill="#ea4335"/>
      <path d="M10.39 -6H0L4.7 2.7L0 12A12 12 0 0 0 10.39 -6Z" fill="#fbc116"/>
      <path d="M0 12L5.2 3L-4.7 2.7L-10.39 -6A12 12 0 0 0 0 12Z" fill="#2a9c47"/>
      <circle r="5.6" fill="#fff"/><circle r="4.4" fill="#3b7ded"/>
    </g>
    <radialGradient id="sun" cx=".35" cy=".3" r=".8"><stop offset="0" stop-color="#fbb52e"/><stop offset="1" stop-color="#e97d0a"/></radialGradient>
    <linearGradient id="cg" x1="0" y1="0" x2="0" y2="1"><stop offset="0" stop-color="#eef4fc"/><stop offset="1" stop-color="#9dbbe6"/></linearGradient>
    <g id="cloud"><path d="M-7 1.8C-7 -.4 -5.4 -1.4 -3.8 -1.2C-3.2 -3.8 .2 -4.8 2.2 -3C4.6 -3.4 5.6 -1.4 5.4 -.4C7.4 -.2 7.6 3.6 5 4H-5C-6.4 4 -7 3 -7 1.8Z"/></g>
    <clipPath id="pf"><circle cx="76.1" cy="1066" r="7.6"/></clipPath>
  </defs>
  <use href="#chrome" x="21.1" y="1060"/>
  <use href="#chrome" transform="translate(70 1059.9) scale(.93)"/>
  <circle cx="76.1" cy="1066" r="7.6" fill="#6b6a4a"/>
  <g clip-path="url(#pf)">
    <rect x="68" y="1058" width="17" height="8" fill="#5d5136"/>
    <ellipse cx="76" cy="1062.6" rx="4.4" ry="3.4" fill="#caa58c"/>
    <ellipse cx="76" cy="1067.2" rx="3.7" ry="3.6" fill="#17171b"/>
    <path d="M68 1074C69 1069 72 1068.4 73 1070L76 1073L79 1070C80 1068.4 83 1069 84 1074Z" fill="#cfc9d4"/>
  </g>
  <!-- fusion -->
  <path d="M108 1051.2L111.6 1048H126.4Q128 1048 128 1049.6V1065H108Z" fill="#ff6b00"/>
  <path d="M108 1051.2L111.6 1048V1065L108 1066.4Z" fill="#ff9a45"/>
  <path d="M128 1051.6L129.8 1052.4V1070Q129.8 1071.8 128 1071.8H111.4Q110 1071.8 110 1070.4V1066L111.6 1065H128Z" fill="#a94600"/>
  <!-- weather -->
  <circle cx="1183" cy="1060.2" r="9.8" fill="url(#sun)"/>
  <use href="#cloud" x="1177.8" y="1052.6" fill="url(#cg)"/>
  <use href="#cloud" x="1188.2" y="1064.8" fill="url(#cg)"/>
  <!-- tray -->
  <path d="M1347.2 1062.8L1353.1 1057L1359 1062.8" stroke="#fff" stroke-width="1.2" fill="none"/>
  <path d="M1369.4 1057.4H1372L1375.4 1054V1066L1372 1062.6H1369.4Z" stroke="#fff" stroke-width="1" fill="none"/>
  <path d="M1377.6 1057.6Q1379 1060 1377.6 1062.4M1380 1055.6Q1382.6 1060 1380 1064.4M1382.6 1053.6Q1386.4 1060 1382.6 1066.4" stroke="#fff" stroke-width="1" fill="none"/>
  <path d="M1397.2 1054.6H1408.6V1063.2H1397.2M1398.8 1066.4H1406.4M1402.6 1063.2V1066.4M1395.2 1058.4V1066.6" stroke="#fff" stroke-width="1" fill="none"/>
  <rect x="1393.4" y="1054.4" width="3.8" height="4" fill="#101010" stroke="#fff" stroke-width="1"/>
</svg>
<span class="t" style="left:116.2px;top:1050.2px;font-size:13px;font-weight:bold;color:#fff">F</span>
<span class="t" style="left:115.4px;top:1065.6px;font-size:5.6px;font-weight:bold;color:#f3d9c6">360</span>
<span class="t" style="left:1203.6px;top:1053.2px;font-size:13.2px;color:#fff;letter-spacing:-.4px">17°C</span>
<span class="t" style="left:1241.4px;top:1053.2px;font-size:13.2px;color:#fff">Parc. soleado</span>
<span class="t" style="left:1421.8px;top:1053.2px;font-size:12.2px;color:#fff;transform:scaleX(.73);transform-origin:0 0">ESP</span>
<span class="t" style="left:1470.6px;top:1045px;font-size:11.6px;color:#fff;transform:scaleX(.88);transform-origin:0 0">18:44</span>
<span class="t" style="left:1458.6px;top:1063px;font-size:11.6px;color:#fff;transform:scaleX(.98);transform-origin:0 0">5/05/2023</span>

</body>
</html>
